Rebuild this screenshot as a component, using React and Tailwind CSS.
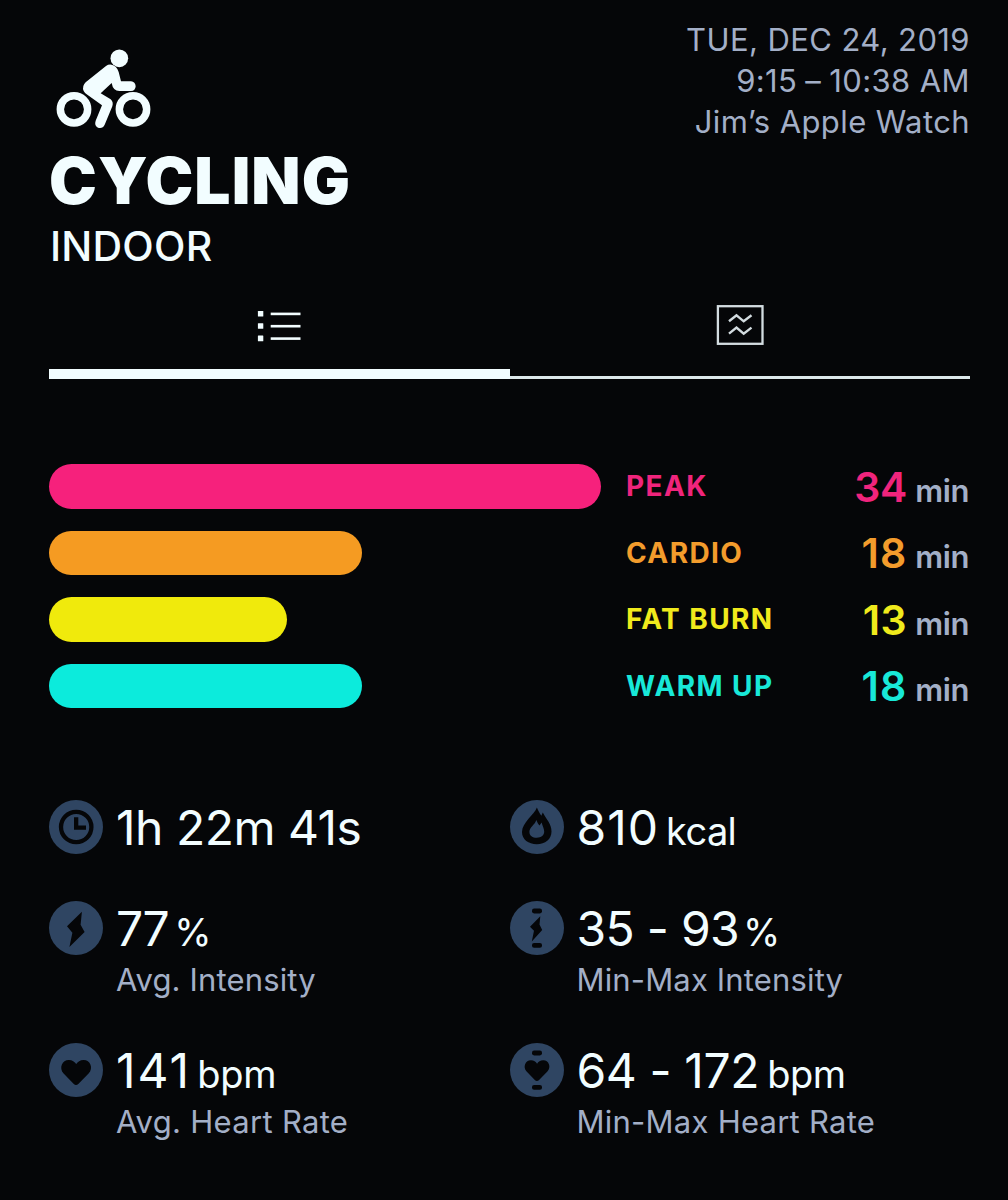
const zones = [
  { name: "PEAK", minutes: 34, width: 552, bar: "bg-[#f6217c]", text: "text-[#f0247c]", digits: "tracking-[-0.2px]" },
  { name: "CARDIO", minutes: 18, width: 313, bar: "bg-[#f59b22]", text: "text-[#f39c2c]", digits: "tracking-[1px]" },
  { name: "FAT BURN", minutes: 13, width: 238, bar: "bg-[#f0ea0c]", text: "text-[#f0ea1c]", digits: "tracking-[0.5px]" },
  { name: "WARM UP", minutes: 18, width: 313, bar: "bg-[#0cebdc]", text: "text-[#18e8d8]", digits: "tracking-[1px]" },
]

const HEART =
  "M27 42 Q25.8 42 24.8 41 L14.6 30.6 C9.6 25 13.2 17 19.8 17 C23.4 17 25.6 18.8 27.2 21 C28.8 18.8 31 17 34.6 17 C41.2 17 44.8 25 39.6 30.6 L29.3 41 Q28.2 42 27 42 Z"

function Cyclist() {
  return (
    <svg className="ml-px h-[95px] w-[110px]" viewBox="0 0 330 285" fill="#f2fdff">
      <circle cx="72" cy="202" r="41" fill="none" stroke="#f2fdff" strokeWidth="22.5" />
      <circle cx="249" cy="202" r="41" fill="none" stroke="#f2fdff" strokeWidth="22.5" />
      <circle cx="208" cy="49" r="26.5" />
      <path d="M168 72 L107 121 Q95 133 101 147 Q104 153 112 158 L156 190 L137 236 Q132 251 144 257 Q158 261 164 248 L187 193 Q191 180 182 172 L152 154 L185 123 Q189 147 208 147 L243 147 Q256 147 257 133 Q256 119 243 118 L213 118 L206 90 Q200 70 184 68 Q175 67 168 72 Z" />
    </svg>
  )
}

function ListIcon() {
  return (
    <svg className="h-8 w-11" viewBox="0 0 44 32" fill="#f2fdff">
      {[0.9, 13.2, 25.6].map((y) => (
        <g key={y}>
          <rect x="0.9" y={y} width="5.4" height="5.6" rx="0.5" />
          <rect x="13.7" y={y + 1.7} width="29.8" height="2.6" />
        </g>
      ))}
    </svg>
  )
}

function ChartIcon() {
  return (
    <svg className="h-10 w-12" viewBox="0 0 48 40" fill="none" stroke="#d3dce0">
      <rect x="1.9" y="1.2" width="44.6" height="37.6" strokeWidth="2.3" />
      <path d="M13 16.3 L20.5 10.3 L27.7 16.3 L35.5 10.3 M13 28.6 L20.5 22.6 L27.7 28.6 L35.5 22.6" strokeWidth="2.4" />
    </svg>
  )
}

function Badge({ children }) {
  return (
    <svg className="h-[54px] w-[54px] shrink-0" viewBox="0 0 54 54" fill="#050608">
      <circle cx="27" cy="27" r="27" fill="#2f4562" />
      {children}
    </svg>
  )
}

function RangeTicks() {
  return (
    <>
      <rect x="22" y="7.6" width="10" height="4.8" rx="2.1" />
      <rect x="22" y="42" width="10" height="4.8" rx="2.1" />
    </>
  )
}

const icons = {
  clock: (
    <Badge>
      <circle cx="27.2" cy="27" r="15.2" fill="none" stroke="#050608" strokeWidth="4.3" />
      <path d="M25 17.3 H29.3 V25.4 H37 V29.7 H25 Z" />
    </Badge>
  ),
  flame: (
    <Badge>
      <path
        fillRule="evenodd"
        d="M26.9 7.5 C24.5 14.5 12 22.5 12 32 C12 39.5 18.5 44.2 26.8 44.2 C35.2 44.2 41.5 39.5 41.5 31.5 C41.5 24 37 20.5 32.8 12.6 L31.3 15.8 C29.5 13 28.2 10.5 26.9 7.5 Z M26.4 20 C25 24.5 19.4 27.5 19.4 31.8 C19.4 35.8 22.5 37.8 26.8 37.8 C31.2 37.8 34.2 35.5 34.2 31.6 C34.2 28.5 32.5 26.3 31.6 22.5 L29.5 25.5 C28 24 27.2 22.3 26.4 20 Z"
      />
    </Badge>
  ),
  bolt: (
    <Badge>
      <path d="M32.9 10.8 L18 25.2 L23.4 31.8 L20.4 46 L35.6 31 L31.6 23.8 Z" />
    </Badge>
  ),
  boltRange: (
    <Badge>
      <RangeTicks />
      <path d="M30.3 15.3 L20 25.8 L24 29.8 L21.8 40.4 L32.2 28.9 L29.5 23.4 Z" />
    </Badge>
  ),
  heart: (
    <Badge>
      <path d={HEART} />
    </Badge>
  ),
  heartRange: (
    <Badge>
      <RangeTicks />
      <path d={HEART} transform="translate(4.5 3.2) scale(0.83)" />
    </Badge>
  ),
}

function Stat({ icon, value, unit, label, valueClass = "", unitClass = "", labelClass = "" }) {
  return (
    <div className="flex gap-[13px]">
      {icons[icon]}
      <div className="whitespace-nowrap">
        <div className="flex h-[54px] items-baseline pt-px text-[#f2fdff]">
          <span className={`text-[48px] leading-[54px] ${valueClass}`}>{value}</span>
          {unit && <span className={`text-[38px] leading-[54px] ${unitClass}`}>{unit}</span>}
        </div>
        {label && <p className={`mt-[5px] text-[31px] leading-10 text-[#a3afc7] ${labelClass}`}>{label}</p>}
      </div>
    </div>
  )
}

export default function App() {
  return (
    <div className="h-[1200px] w-[1008px] overflow-hidden bg-[#050608] pr-[38px] pl-[49px] font-['Inter',sans-serif]">
      <header className="flex h-[276px] justify-between">
        <div className="pt-[42px]">
          <Cyclist />
          <h1 className="mt-3 text-[64px] leading-[64px] font-black tracking-[1.1px] text-[#f2fdff]">CYCLING</h1>
          <p className="mt-[9px] ml-px text-[41px] leading-[48px] font-medium tracking-[0.2px] text-[#f2fdff]">INDOOR</p>
        </div>
        <div className="pt-[19px] text-right text-[31px] leading-[41px] tracking-[0.4px] text-[#a3afc7]">
          <p>TUE, DEC 24, 2019</p>
          <p>
            9:15<span className="mx-[8px]">–</span>10:38 AM
          </p>
          <p>Jim’s Apple Watch</p>
        </div>
      </header>

      {/* Tabs */}
      <nav className="flex h-[103px]">
        <button className="flex w-[460.5px] justify-center border-b-[10px] border-[#f2fdff] pt-[34px]">
          <ListIcon />
        </button>
        <button className="flex w-[460.5px] justify-center border-b-[3px] border-[#dce8ea] pt-[29px]">
          <ChartIcon />
        </button>
      </nav>

      {/* Heart rate zones */}
      <section className="mt-[85px] flex flex-col gap-[22px]">
        {zones.map((zone) => (
          <div key={zone.name} className="flex h-[44.5px] items-center">
            <div className="w-[577px]">
              <div className={`h-[44.5px] rounded-full ${zone.bar}`} style={{ width: zone.width }} />
            </div>
            <span className={`text-[28px] font-bold tracking-[1.4px] ${zone.text}`}>{zone.name}</span>
            <span className="ml-auto flex items-baseline gap-[8px] pt-[6px] pr-px">
              <span className={`text-[41px] leading-[44px] font-semibold ${zone.text} ${zone.digits}`}>
                {zone.minutes}
              </span>
              <span className="text-[31px] font-semibold tracking-[-0.4px] text-[#a3afc7]">min</span>
            </span>
          </div>
        ))}
      </section>

      {/* Workout stats */}
      <section className="mt-[92px] grid grid-cols-[460.5px_1fr]">
        <div className="h-[101px]">
          <Stat icon="clock" value="1h 22m 41s" valueClass="tracking-[-0.5px]" />
        </div>
        <Stat icon="flame" value="810" unit="kcal" valueClass="tracking-[1px]" unitClass="ml-[7px] tracking-[-0.6px]" />
        <div className="h-[142px]">
          <Stat
            icon="bolt"
            value="77"
            unit="%"
            label="Avg. Intensity"
            valueClass="tracking-[-1.5px]"
            unitClass="ml-[6px]"
            labelClass="tracking-[0.15px]"
          />
        </div>
        <Stat
          icon="boltRange"
          value="35 - 93"
          unit="%"
          label="Min-Max Intensity"
          valueClass="tracking-[-0.7px]"
          unitClass="ml-[4px]"
          labelClass="tracking-[0.15px]"
        />
        <Stat
          icon="heart"
          value="141"
          unit="bpm"
          label="Avg. Heart Rate"
          valueClass="tracking-[2px]"
          unitClass="ml-[6px] tracking-[-0.2px]"
          labelClass="tracking-[0.3px]"
        />
        <Stat
          icon="heartRange"
          value="64 - 172"
          unit="bpm"
          label="Min-Max Heart Rate"
          valueClass="tracking-[-0.4px]"
          unitClass="ml-2 tracking-[-0.4px]"
          labelClass="tracking-[0.25px]"
        />
      </section>
    </div>
  )
}
